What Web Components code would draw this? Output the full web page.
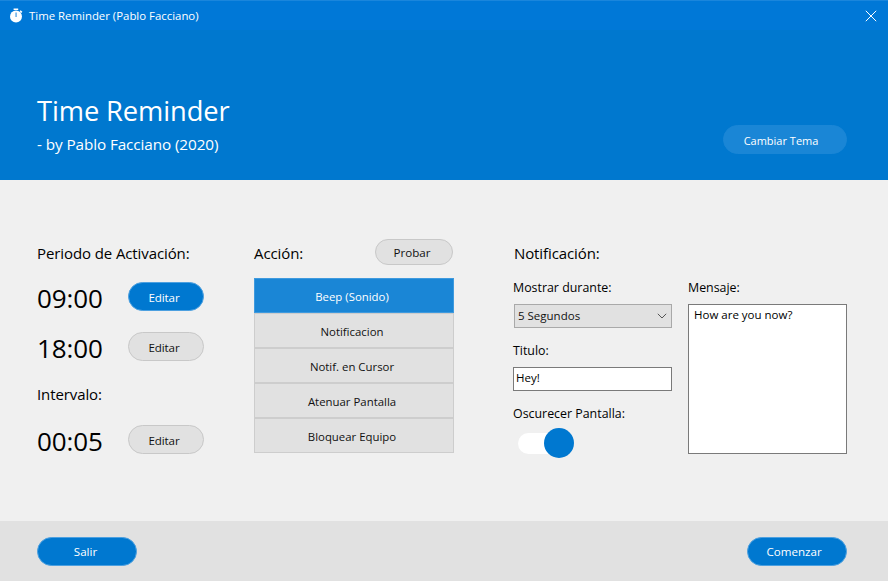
<!DOCTYPE html>
<html lang="en">
<head>
<meta charset="UTF-8">
<title>Time Reminder</title>
<style>
  html, body { margin: 0; padding: 0; }
  body { font-family: "Open Sans", "Noto Sans", sans-serif; color: #000; background: #f0f0f0; }
</style>
<script>
  function define(name, css, html) {
    customElements.define(name, class extends HTMLElement {
      constructor() {
        super();
        this.attachShadow({ mode: 'open' }).innerHTML = '<style>' + css + '</style>' + html;
      }
    });
  }

  define('tr-titlebar', `
    :host { display: flex; align-items: center; height: 30px; box-sizing: border-box; border-top: 1px solid #1a86dc;
      background: #0078d7; color: #fff; font-size: 11.4px; padding: 0 11px 0 9px; }
    span { margin-left: 6px; flex: 1; }
    svg { display: block; }
  `, `
    <svg width="14" height="16" viewBox="0 0 14 16"><path fill="#fff" d="M4.6.5h4.6v1.5H4.6z"/><circle cx="7" cy="8.5" r="6" fill="#fff"/><path fill="#fff" d="M11.6 2.2l1.8 1.6-1 1.1-1.8-1.6z"/><path fill="#0078d7" d="M6.6 4.6h.9v4.4h-.9z"/></svg>
    <span><slot></slot></span>
    <svg width="12" height="12" viewBox="0 0 12 12"><path stroke="#fff" stroke-width="1" fill="none" d="M.8.8l10.4 10.4M11.2.8L.8 11.2"/></svg>
  `);

  define('tr-hero', `
    :host { display: flex; justify-content: space-between; align-items: flex-end; height: 150px; box-sizing: border-box;
      background: #0078cf; color: #fff; padding: 0 41px 24px 37px; }
    h1 { font-weight: 400; font-size: 27.3px; line-height: 36px; margin: 0 0 3px; letter-spacing: -.1px; }
    p { font-size: 15.3px; line-height: 24px; margin: 0; letter-spacing: -.1px; }
    ::slotted(tr-pill) { margin-bottom: 2px; font-size: 11px; }
  `, `
    <div><h1><slot name="title"></slot></h1><p><slot name="sub"></slot></p></div>
    <slot name="action"></slot>
  `);

  define('tr-pill', `
    :host { display: inline-flex; align-items: center; justify-content: center; box-sizing: border-box;
      width: var(--w, 76px); height: var(--h, 29px); border-radius: 15px; font-size: 11.6px;
      padding: 1px var(--shift, 4px) 0 0;
      background: #e1e1e1; border: 1px solid #c8c8c8; color: #111; }
    :host([primary]) { background: #0078d0; border-color: #4ca0e0; color: #fff; }
    :host([soft]) { background: #1a86d6; border-color: #1a86d6; color: #fff; }
  `, `<slot></slot>`);

  define('tr-time', `
    :host { display: flex; align-items: center; width: 167px; height: 29px; font-size: 26px; letter-spacing: -.1px; }
    span { width: 91px; padding-top: 2px; }
  `, `<span><slot></slot></span><slot name="btn"></slot>`);

  define('tr-actions', `
    :host { display: flex; flex-direction: column; width: 200px; }
  `, `<slot></slot>`);

  define('tr-action', `
    :host { display: flex; align-items: center; justify-content: center; box-sizing: border-box; height: 35px;
      background: #e1e1e1; border: 1px solid #cdcdcd; font-size: 11.4px; color: #111; padding: 1px 4px 0 0; }
    :host([active]) { background: #1a86d6; border-color: #3f9ade; color: #fff; }
  `, `<slot></slot>`);

  define('tr-select', `
    :host { display: flex; align-items: center; justify-content: space-between; box-sizing: border-box; width: 158px; height: 24px;
      margin-left: 1px; background: #e1e1e1; border: 1px solid #a9a9a9; padding: 0 4px 2px 3px; font-size: 11.5px; color: #111; }
    svg { display: block; margin-top: 2px; }
  `, `<slot></slot><svg width="10" height="6" viewBox="0 0 10 6"><path d="M.8.8L5 5l4.2-4.2" fill="none" stroke="#555"/></svg>`);

  define('tr-box', `
    :host { display: block; box-sizing: border-box; width: var(--w, 160px); height: var(--h, 24px); background: #fff;
      border: 1px solid #7a7a7a; padding: var(--p, 2px 2px); font-size: 11.5px; line-height: 16px; color: #000; }
  `, `<slot></slot>`);

  define('tr-toggle', `
    :host { display: flex; align-items: center; width: 60px; height: 30px; margin: 2px 0 0 5px; }
    i { display: block; width: 40px; height: 21px; border-radius: 11px; background: #fff; }
    b { display: block; width: 30px; height: 30px; border-radius: 50%; background: #0078d0; margin-left: -14px; }
  `, `<i></i><b></b>`);

  define('tr-footer', `
    :host { display: flex; justify-content: space-between; align-items: center; height: 60px; box-sizing: border-box;
      background: #e1e1e1; padding: 0 41px 0 37px; }
  `, `<slot></slot>`);

  define('tr-main', `
    :host { display: flex; height: 341px; box-sizing: border-box; background: #f0f0f0; padding: 59px 0 0 37px; }
    .label { font-size: 12.4px; line-height: 17px; margin-top: -1px; }
    .head { font-size: 15px; line-height: 28px; height: 30px; letter-spacing: -.1px; }
    .left { width: 217px; }
    .mid { width: 259px; }
    .midhead { display: flex; justify-content: space-between; width: 199px; height: 39px; }
    .right { display: flex; flex-direction: column; }
    .cols { display: flex; gap: 16px; }
    .c1 { width: 159px; }
  `, `
    <section class="left">
      <div class="head" style="margin-bottom:13px"><slot name="h-period"></slot></div>
      <slot name="t1"></slot>
      <div style="height:21px"></div>
      <slot name="t2"></slot>
      <div class="head" style="margin:19px 0 15px"><slot name="h-interval"></slot></div>
      <slot name="t3"></slot>
    </section>
    <section class="mid">
      <div class="midhead"><div class="head"><slot name="h-action"></slot></div><slot name="probar"></slot></div>
      <slot name="actions"></slot>
    </section>
    <section class="right">
      <div class="head" style="margin:0 0 11px 1px"><slot name="h-notif"></slot></div>
      <div class="cols">
        <div class="c1">
          <div class="label" style="height:25px"><slot name="l-show"></slot></div>
          <slot name="select"></slot>
          <div class="label" style="height:25px;padding-top:15px"><slot name="l-title"></slot></div>
          <slot name="title"></slot>
          <div class="label" style="height:21px;padding-top:15px"><slot name="l-dim"></slot></div>
          <slot name="toggle"></slot>
        </div>
        <div>
          <div class="label" style="height:25px"><slot name="l-msg"></slot></div>
          <slot name="msg"></slot>
        </div>
      </div>
    </section>
  `);

  define('tr-app', `
    :host { display: flex; flex-direction: column; width: 888px; height: 581px; overflow: hidden; }
  `, `<slot></slot>`);
</script>
</head>
<body>
<tr-app>
  <tr-titlebar>Time Reminder (Pablo Facciano)</tr-titlebar>
  <tr-hero>
    <span slot="title">Time Reminder</span>
    <span slot="sub">- by Pablo Facciano (2020)</span>
    <tr-pill slot="action" soft style="--w:124px;--h:29px;--shift:8px">Cambiar Tema</tr-pill>
  </tr-hero>
  <tr-main>
    <span slot="h-period">Periodo de Activación:</span>
    <tr-time slot="t1">09:00<tr-pill slot="btn" primary>Editar</tr-pill></tr-time>
    <tr-time slot="t2">18:00<tr-pill slot="btn">Editar</tr-pill></tr-time>
    <span slot="h-interval">Intervalo:</span>
    <tr-time slot="t3">00:05<tr-pill slot="btn">Editar</tr-pill></tr-time>

    <span slot="h-action">Acción:</span>
    <tr-pill slot="probar" style="--w:78px;--h:26px">Probar</tr-pill>
    <tr-actions slot="actions">
      <tr-action active>Beep (Sonido)</tr-action>
      <tr-action>Notificacion</tr-action>
      <tr-action>Notif. en Cursor</tr-action>
      <tr-action>Atenuar Pantalla</tr-action>
      <tr-action>Bloquear Equipo</tr-action>
    </tr-actions>

    <span slot="h-notif">Notificación:</span>
    <span slot="l-show">Mostrar durante:</span>
    <tr-select slot="select">5 Segundos</tr-select>
    <span slot="l-title">Titulo:</span>
    <tr-box slot="title" style="--w:159px">Hey!</tr-box>
    <span slot="l-dim">Oscurecer Pantalla:</span>
    <tr-toggle slot="toggle"></tr-toggle>
    <span slot="l-msg">Mensaje:</span>
    <tr-box slot="msg" style="--w:159px;--h:150px;--p:2px 5px">How are you now?</tr-box>
  </tr-main>
  <tr-footer>
    <tr-pill primary style="--w:100px;--h:29px;--shift:3px">Salir</tr-pill>
    <tr-pill primary style="--w:100px;--h:29px;--shift:6px">Comenzar</tr-pill>
  </tr-footer>
</tr-app>
</body>
</html>
